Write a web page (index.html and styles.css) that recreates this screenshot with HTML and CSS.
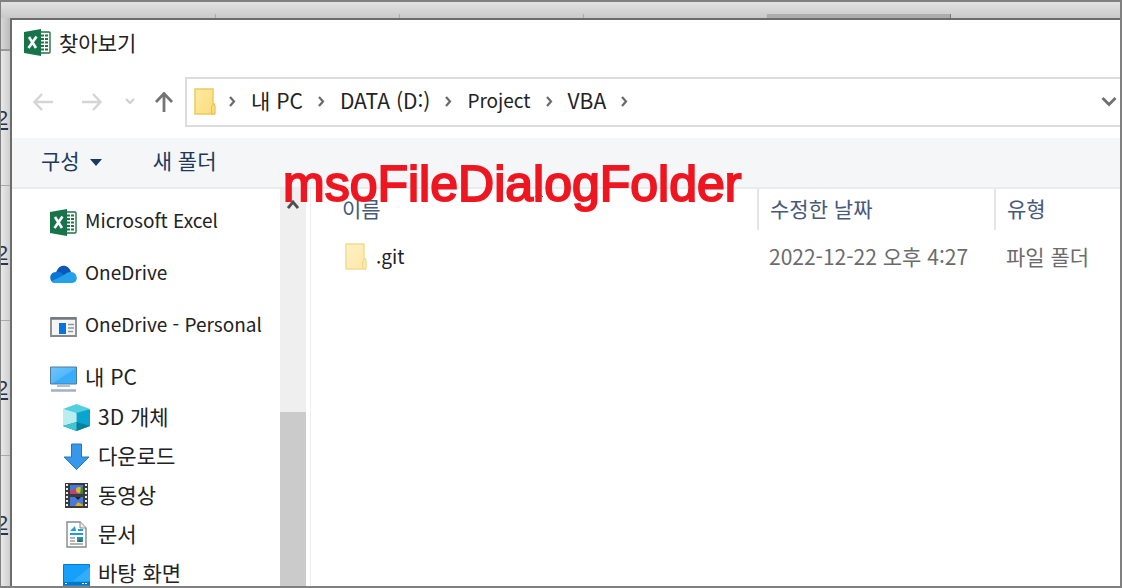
FILE: index.html
```html
<!DOCTYPE html>
<html lang="ko">
<head>
<meta charset="utf-8">
<meta name="viewport" content="width=device-width, initial-scale=1">
<title>찾아보기</title>
<link rel="stylesheet" href="styles.css">
</head>
<body>
<svg class="defs" aria-hidden="true">
  <defs>
    <linearGradient id="fold" x1="0" y1="0" x2="1" y2="1"><stop offset="0" stop-color="#ffeaa3"/><stop offset="1" stop-color="#fbdc7c"/></linearGradient>
    <linearGradient id="screen" x1="0" y1="0" x2="1" y2="1"><stop offset="0" stop-color="#6fc4fb"/><stop offset=".5" stop-color="#55b9fb"/><stop offset=".55" stop-color="#37acfa"/><stop offset="1" stop-color="#3fb0fa"/></linearGradient>
    <symbol id="excel" viewBox="0 0 27 27">
      <rect x="15" y="3" width="11" height="21" rx="1" fill="#fff" stroke="#217346" stroke-width="1.4"/>
      <path d="M17 6.5h7M17 10h7M17 13.500h7M17 17h7M17 20.500h7" stroke="#217346" stroke-width="2" stroke-dasharray="3 1"/>
      <path d="M0 3 17 0v27L0 24z" fill="#17744a"/>
      <path d="M5 8l7 11M12.500 7.500 4.500 19" stroke="#fff" stroke-width="2.600" fill="none"/>
    </symbol>
    <symbol id="folder" viewBox="0 0 22 27">
      <path d="M1 1h18v15h1.500v10H1z" fill="url(#fold)" stroke="#eccb59" stroke-width="1.500"/>
      <path d="M17.500 26v-8l2-2 1.500 2v8z" fill="#fbdc7c" stroke="#e8c24a"/>
    </symbol>
    <symbol id="chev" viewBox="0 0 9 11"><path d="M2 1l4 4.500L2 10" fill="none" stroke="#6b6b6b" stroke-width="2.200"/></symbol>
  </defs>
</svg>
<div class="frame">
  <div class="sheet-head"><span></span><span></span><span></span><span></span><span class="selected"></span></div>
  <div class="below">
    <div class="sheet-rows">
      <div class="corner"></div>
      <div class="cell"><u>2</u>.</div><div class="cell"><u>2</u>.</div><div class="cell"><u>2</u>.</div><div class="cell"><u>2</u>.</div>
    </div>
    <main class="dialog">
      <header class="title"><svg class="i27"><use href="#excel"/></svg><h1>찾아보기</h1></header>
      <nav class="nav">
        <div class="arrows">
          <button aria-label="뒤로"><svg width="20" height="18" viewBox="0 0 20 18"><path d="M20 9H2M9 1 1.500 9 9 17" fill="none" stroke="#d5d5d5" stroke-width="2.400"/></svg></button>
          <button aria-label="앞으로"><svg width="20" height="18" viewBox="0 0 20 18"><path d="M0 9h18M11 1l7.500 8-7.500 8" fill="none" stroke="#d5d5d5" stroke-width="2.400"/></svg></button>
          <button aria-label="최근 위치"><svg width="10" height="7" viewBox="0 0 10 7"><path d="M1 1l4 4 4-4" fill="none" stroke="#cfcfcf" stroke-width="2"/></svg></button>
          <button aria-label="위로"><svg width="18" height="20" viewBox="0 0 18 20"><path d="M9 20V2M1 10 9 1.500 17 10" fill="none" stroke="#747474" stroke-width="2.800"/></svg></button>
        </div>
        <div class="address">
          <svg class="folder"><use href="#folder"/></svg>
          <svg class="chev"><use href="#chev"/></svg><a href="#">내 PC</a>
          <svg class="chev"><use href="#chev"/></svg><a href="#">DATA (D:)</a>
          <svg class="chev"><use href="#chev"/></svg><a href="#" class="latin">Project</a>
          <svg class="chev"><use href="#chev"/></svg><a href="#">VBA</a>
          <svg class="chev"><use href="#chev"/></svg>
          <button class="drop" aria-label="이전 위치"><svg width="16" height="11" viewBox="0 0 16 11"><path d="M1.500 2 8 8.500 14.500 2" fill="none" stroke="#707070" stroke-width="2.800"/></svg></button>
        </div>
      </nav>
      <div class="tools">
        <button>구성 <svg width="12" height="7" viewBox="0 0 12 7"><path d="M0 0h12L6 7z" fill="#183a66"/></svg></button>
        <button>새 폴더</button>
      </div>
      <div class="panes">
        <ul class="tree">
          <li><a href="#" class="latin"><svg class="i27"><use href="#excel"/></svg>Microsoft Excel</a></li>
          <li><a href="#" class="latin"><svg class="i27" viewBox="0 0 27 27"><path d="M6 12C8 3 18 2 21 11l-8 5z" fill="#0a57b8"/><path d="M5 22C-2 21-1 11 6 11c4-1 6 1 8 3l-6 8z" fill="#0b74d4"/><path d="M21 11c7 0 8 11 1 11H6c-3 0-4-1-4-2l12-6c2-2 4-3 7-3z" fill="#25a0ea"/></svg>OneDrive</a></li>
          <li><a href="#" class="latin"><svg class="i27" viewBox="0 0 27 27"><path d="M1 5h25v18H1z" fill="#f5f5f5" stroke="#85888c" stroke-width="1.800"/><path d="M1 5.500h25" stroke="#747a80" stroke-width="2.500"/><path d="M9 10h7v11H9z" fill="#0873db"/><path d="M18 11.500h6M18 15h6M18 18.500h5" stroke="#92989d" stroke-width="1.500"/></svg>OneDrive - Personal</a></li>
          <li><a href="#"><svg class="i27" viewBox="0 0 27 27"><path d="M.5 2h26v17H.5z" fill="url(#screen)" stroke="#54799b"/><path d="M7 21h13" stroke="#9babb8" stroke-width="1.500"/><path d="M1 25.500h25" stroke="#a0b1c1" stroke-width="2.500"/></svg>내 PC</a>
            <ul>
              <li><a href="#"><svg class="i27" viewBox="0 0 27 27"><path d="M0 5 13.500 0 27 5l-13.500 5z" fill="#52d0df"/><path d="M0 5l13.500 4v18L0 22z" fill="#b9edee"/><path d="M27 5 13.500 9v18L27 22z" fill="#0aa4d0"/><path d="M0 22l13.500-4L27 22l-13.500 5z" fill="#087f9c"/><path d="M0 22l13.500-4v9z" fill="#41c5d2"/></svg>3D 개체</a></li>
              <li><a href="#"><svg class="i27" viewBox="0 0 27 27"><path d="M8.500 1h10v13H26L13.500 26.500 1 14h7.500z" fill="#3797eb" stroke="#2577c5"/></svg>다운로드</a></li>
              <li><a href="#"><svg class="i27" viewBox="0 0 27 27"><path d="M2 1h23v25H2z" fill="#393b3d"/><path d="M4 2v24M23 2v24" stroke="#eee" stroke-width="2" stroke-dasharray="2 2"/><path d="M7 3h13v9H7zM7 15h13v9H7z" fill="#4779d8"/><path d="M7 9l5-2 3 5H7z" fill="#c73f72"/><circle cx="16" cy="8" r="3" fill="#dfb921"/><path d="M12 15h6l-3 3z" fill="#222"/><path d="M12 24l3-4 5 3v1z" fill="#e2aa20"/><path d="M18 5h2v7h-3z" fill="#398347"/></svg>동영상</a></li>
              <li><a href="#"><svg class="i27" viewBox="0 0 27 27"><path d="M4 1h13l6 6v19H4z" fill="#fff" stroke="#85898b" stroke-width="1.400"/><path d="M17 1v6h6" fill="#eee" stroke="#85898b"/><path d="M7 10l5-5 1 5z" fill="#249bdc"/><path d="M15 9h5M7 13h13" stroke="#249bdc" stroke-width="2" fill="none"/><path d="M7 17h5M7 20h5M7 23h13" stroke="#9c9c9c" stroke-width="1.500"/><path d="M14 16h6v5h-6z" fill="#2d8dc1"/><path d="M14 21l3-3 3 3z" fill="#2c704c"/></svg>문서</a></li>
              <li><a href="#"><svg class="i27" viewBox="0 0 27 27"><path d="M.5 4.500h26V26H.5z" fill="#17a0fa" stroke="#087bc8"/><path d="M27 7v14H10z" fill="#31adfc"/><path d="M1 22h25v3H1z" fill="#0876c3"/><path d="M2 23.500h2M19 23.500h5" stroke="#fff" stroke-dasharray="2 1"/></svg>바탕 화면</a></li>
            </ul>
          </li>
        </ul>
        <div class="scroll"><button aria-label="위로 스크롤"><svg width="12" height="11" viewBox="0 0 12 11"><path d="M1 9l5-6 5 6" fill="none" stroke="#505050" stroke-width="2.800"/></svg></button><div class="thumb"></div></div>
        <div class="files">
          <table>
            <colgroup><col><col class="date"><col class="kind"></colgroup>
            <thead><tr><th>이름<svg class="sort" width="10" height="6" viewBox="0 0 10 6"><path d="M1 5l4-4 4 4" fill="none" stroke="#555"/></svg></th><th>수정한 날짜</th><th>유형</th></tr></thead>
            <tbody><tr><td><div class="name latin"><svg class="folder faded"><use href="#folder"/></svg>.git</div></td><td>2022-12-22 오후 4:27</td><td>파일 폴더</td></tr></tbody>
          </table>
        </div>
      </div>
    </main>
  </div>
</div>
<div class="caption">msoFileDialogFolder</div>
</body>
</html>
```

FILE: styles.css
```css
* { box-sizing: border-box; }
body { margin: 0; overflow: hidden; font: 21px/28px "Noto Sans CJK KR", sans-serif; color: #222; }
.defs { position: absolute; width: 0; height: 0; }
svg { display: block; flex: none; }
button { display: flex; align-items: center; padding: 0; border: 0; background: none; font: inherit; color: inherit; }
a { color: inherit; text-decoration: none; }
ul { margin: 0; padding: 0; list-style: none; }
.latin { font-size: 19px; }
.frame { display: flex; flex-direction: column; height: 100vh; overflow: hidden; border: 2px solid #808080; border-left-width: 1px; background: #dedede; }
.sheet-head { display: flex; flex: none; height: 16px; padding-left: 31px; background: linear-gradient(#e2e2e2, #c9c9c9); align-items: flex-end; }
.sheet-head span { width: 184px; height: 4px; border-left: 1px solid #aaa; }
.sheet-head span:first-child { width: 183px; border-color: transparent; }
.sheet-head .selected { background: #adadad; border-right: 1px solid #777; }
.below { display: flex; flex: 1; min-height: 0; }
.sheet-rows { flex: none; width: 9px; overflow: hidden; background: linear-gradient(90deg, #e9e9e9, #cfcfcf); }
.corner { height: 33px; border-bottom: 2px solid #999; background: linear-gradient(90deg, #d8d8d8, #bbb); }
.cell { display: flex; align-items: center; justify-content: flex-end; height: 135px; margin-right: -4px; border-bottom: 1px solid #aaa; font-family: "Liberation Sans", sans-serif; color: #24364e; }
.cell u { text-underline-offset: 3px; }
.dialog { flex: 1; min-width: 0; display: flex; flex-direction: column; background: #fff; border: 2px solid #6c6c6c; border-width: 2px 0 0 2px; }
.title { display: flex; align-items: center; gap: 8px; height: 46px; padding: 0 0 2px 12px; }
h1 { margin: 0; font-size: 21px; font-weight: 400; }
.i27 { width: 27px; height: 27px; }
.nav { display: flex; align-items: center; height: 72px; padding-bottom: 1px; }
.arrows { display: flex; flex: none; align-items: center; width: 173px; padding-left: 21px; }
.arrows button { margin-right: 29px; }
.arrows button:nth-child(2) { margin-right: 23px; }
.arrows button:nth-child(3) { margin-right: 20px; }
.arrows button:nth-child(4) { margin-right: 0; }
.address { display: flex; flex: 1; align-items: center; height: 50px; padding: 0 3px 0 7px; border: 2px solid #dcdcdc; border-right: 0; }
.address a { padding-bottom: 3px; }
.folder { width: 22px; height: 27px; }
.faded { opacity: .65; }
.chev { width: 9px; height: 11px; margin: 0 14px; }
.address .folder + .chev { margin: 0 14px 0 12px; }
.drop { margin-left: auto; }
.tools { display: flex; flex: none; gap: 51px; height: 51px; padding: 0 0 5px 29px; background: #f4f6f8; border-bottom: 2px solid #e9ecef; color: #1e395b; }
.tools button { gap: 10px; }
.tools svg { margin-top: 4px; }
.panes { display: flex; flex: 1; min-height: 0; }
.tree { flex: none; width: 268px; padding-top: 7px; overflow: hidden; }
.tree a { display: flex; align-items: center; gap: 8px; height: 52px; padding: 0 0 4px 38px; white-space: nowrap; }
.tree a svg { margin-top: 4px; }
.tree ul a { height: 39px; padding-left: 51px; }
.tree ul { margin-top: -6px; }
.scroll { display: flex; flex: none; flex-direction: column; align-items: center; width: 26px; background: #efefef; }
.scroll button { height: 31px; }
.thumb { width: 26px; flex: 1; margin-top: 192px; background: #cbcbcb; }
.files { flex: 1; min-width: 0; margin-left: 4px; border-left: 1px solid #eee; }
table { width: 100%; table-layout: fixed; border-collapse: collapse; }
.date { width: 237px; }
.kind { width: 125px; }
th, td { padding: 0 0 0 11px; text-align: left; font-weight: 400; white-space: nowrap; }
th { position: relative; height: 41px; padding-bottom: 4px; color: #45597a; border-right: 2px solid #e5e5e5; }
th:last-child { border-right: 0; }
th:first-child { padding-left: 31px; }
td { height: 52px; color: #6b6b6b; }
td:first-child { padding-left: 34px; color: #222; }
.name { display: flex; align-items: center; gap: 9px; }
.sort { position: absolute; top: 3px; left: 50%; }
.caption { position: absolute; left: 283px; top: 156px; font: 50px/57px "Liberation Sans", sans-serif; color: #ee1620; -webkit-text-stroke: 2px #ee1620; }
```
